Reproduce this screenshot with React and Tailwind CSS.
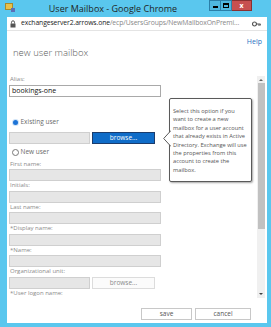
import React from "react";

const font = { fontFamily: '"Open Sans", "Noto Sans", sans-serif' };

const tipLines = [
    "Select this option if you",
    "want to create a new",
    "mailbox for a user account",
    "that already exists in Active",
    "Directory. Exchange will use",
    "the properties from this",
    "account to create the",
    "mailbox.",
];

function Field({ label, children }) {
    return (
        <div>
            <div className="text-[6px] leading-[8px] text-[#8a8a8a] pl-px">{label}</div>
            <div className="mt-[1.5px]">{children}</div>
        </div>
    );
}

function GreyInput({ w = "w-[152px]" }) {
    return <div className={`${w} h-[12px] bg-[#e6e6e6] border border-[#cfcfcf]`}></div>;
}

export default function App() {
    return (
        <div className="w-[271px] h-[327px] bg-[#5ac7ee] flex flex-col overflow-hidden" style={font}>
            {/* title bar */}
            <div className="h-[17px] flex items-start relative">
                <div className="ml-[5px] mt-[3px] w-[8px] h-[7px] bg-[#e8c14a] border border-[#a88a2a] relative">
                    <div className="absolute right-[-3px] bottom-[-3px] w-[4px] h-[4px] bg-[#5a6fb8]"></div>
                </div>
                <div className="flex-1 text-center text-[9px] leading-[17px] text-[#1f1f1f] pl-[4px]">User Mailbox - Google Chrome</div>
                <div className="flex mr-[19px]">
                    <div className="w-[12px] h-[11px] bg-[#4fb7e0] border border-[#2b7fa8] flex items-center justify-center">
                        <div className="w-[5px] h-[2px] bg-black mt-[3px]"></div>
                    </div>
                    <div className="w-[11px] h-[11px] bg-[#4fb7e0] border border-[#2b7fa8] border-l-0 flex items-center justify-center">
                        <div className="w-[6px] h-[5px] border border-black border-t-2"></div>
                    </div>
                    <div className="w-[20px] h-[11px] bg-[#c75050] border border-[#8a3030] border-l-0 flex items-center justify-center text-white text-[7px] font-bold leading-none">x</div>
                </div>
            </div>

            <div className="flex-1 ml-[7px] mr-[4px] mb-[4px] bg-white flex flex-col min-h-0">
                {/* address bar */}
                <div className="h-[14px] flex items-center border-b border-[#e4e4e4] pl-[2px] pr-[6px]">
                    <svg width="8" height="8" viewBox="0 0 8 8" className="mr-[4px] shrink-0">
                        <rect x="1.5" y="3.5" width="5" height="4" fill="#555" />
                        <path d="M2.5 3.5V2.3a1.5 1.5 0 0 1 3 0V3.5" stroke="#555" fill="none" strokeWidth="1" />
                    </svg>
                    <div className="flex-1 text-[6.8px] leading-none whitespace-nowrap tracking-[-0.1px]">
                        <span className="text-[#222]">exchangeserver2.arrows.one</span>
                        <span className="text-[#888]">/ecp/UsersGroups/NewMailboxOnPremi...</span>
                    </div>
                    <svg width="9" height="6" viewBox="0 0 9 6" className="shrink-0">
                        <circle cx="2.5" cy="3" r="2" fill="none" stroke="#555" strokeWidth="1.2" />
                        <path d="M4.5 3H8.5M7 3V5M8.3 3V4.5" stroke="#555" strokeWidth="1" />
                    </svg>
                </div>

                {/* header */}
                <div className="relative h-[44px]">
                    <div className="absolute right-[5px] top-[7px] text-[7px] leading-[8px] text-[#1f6fbf]">Help</div>
                    <div className="absolute left-[6px] top-[17px] text-[9.5px] leading-[10px] text-[#5a5a5a] font-light">new user mailbox</div>
                </div>

                {/* scroll area */}
                <div className="flex h-[223px] relative">
                    <div className="flex-1 pl-[2px] flex flex-col">
                        <div className="text-[6px] leading-[8px] text-[#8a8a8a] pl-px">Alias:</div>
                        <div className="mt-[2px] w-[152px] h-[12px] border border-[#a9a9a9] text-[7px] leading-[10px] pl-[2px] text-[#111]">bookings-one</div>

                        <div className="mt-[21px] h-[10px] flex items-center pl-[3px]">
                            <div className="w-[7px] h-[7px] rounded-full bg-[#cfe3f7] flex items-center justify-center">
                                <div className="w-[5px] h-[5px] rounded-full bg-[#1c73d6]"></div>
                            </div>
                            <span className="ml-[1.5px] text-[6.5px] text-[#6a6a6a] leading-none">Existing user</span>
                        </div>
                        <div className="mt-[5px] flex gap-[2px]">
                            <GreyInput w="w-[81px]" />
                            <div className="w-[63px] h-[12px] bg-[#0f6cc8] border border-[#1b3c6c] text-white text-[6.5px] leading-[10px] text-center">browse...</div>
                        </div>
                        <div className="mt-[4px] h-[10px] flex items-center pl-[3px]">
                            <div className="w-[7px] h-[7px] rounded-full border border-[#777] bg-white"></div>
                            <span className="ml-[1.5px] text-[6.5px] text-[#6a6a6a] leading-none">New user</span>
                        </div>

                        <div className="mt-[3px] flex flex-col">
                            <Field label="First name:"><GreyInput /></Field>
                            <Field label="Initials:"><GreyInput /></Field>
                            <Field label="Last name:"><GreyInput /></Field>
                            <Field label="*Display name:"><GreyInput /></Field>
                            <Field label="*Name:"><GreyInput /></Field>
                            <Field label="Organizational unit:">
                                <div className="flex gap-[2px]">
                                    <GreyInput w="w-[81px]" />
                                    <div className="w-[63px] h-[12px] bg-[#fbfbfb] border border-[#dcdcdc] text-[#8a8a8a] text-[6.5px] leading-[10px] text-center">browse...</div>
                                </div>
                            </Field>
                            <Field label="*User logon name:"><div></div></Field>
                        </div>
                    </div>

                    {/* scrollbar */}
                    <div className="w-[8px] mr-[2px] mt-px bg-[#f0f0f0] flex flex-col items-center">
                        <div className="h-[7px] flex items-center justify-center">
                            <div className="w-0 h-0 border-l-[2.5px] border-r-[2.5px] border-b-[2.5px] border-l-transparent border-r-transparent border-b-[#606060]"></div>
                        </div>
                        <div className="w-[7px] h-[146px] bg-[#c1c1c1]"></div>
                        <div className="flex-1"></div>
                        <div className="h-[9px] flex items-center justify-center">
                            <div className="w-0 h-0 border-l-[2.5px] border-r-[2.5px] border-t-[2.5px] border-l-transparent border-r-transparent border-t-[#404040]"></div>
                        </div>
                    </div>

                    {/* tooltip */}
                    <div className="absolute left-[162px] top-[23px] w-[83px] h-[84px] bg-white border border-[#5a5a5a] rounded-[2px] shadow-[1px_1px_2px_rgba(0,0,0,0.35)] pl-[3px] pt-[8px] text-[5.7px] leading-[8.4px] text-[#555] whitespace-nowrap">
                        {tipLines.map((l) => (
                            <div key={l}>{l}</div>
                        ))}
                        <svg width="8" height="17" viewBox="0 0 8 17" className="absolute left-[-7.5px] top-[31px]">
                            <path d="M8 0.5L0.7 8.5L8 16.5" fill="white" stroke="#5a5a5a" strokeWidth="1" />
                        </svg>
                    </div>
                </div>

                {/* footer */}
                <div className="flex-1 flex justify-end items-start pt-[10px] pr-[16px] gap-[3px]">
                    <div className="w-[51px] h-[12px] border border-[#c8c8c8] bg-white text-[6.5px] leading-[10px] text-center text-[#555]">save</div>
                    <div className="w-[56px] h-[12px] border border-[#c8c8c8] bg-white text-[6.5px] leading-[10px] text-center text-[#555]">cancel</div>
                </div>
            </div>
        </div>
    );
}
